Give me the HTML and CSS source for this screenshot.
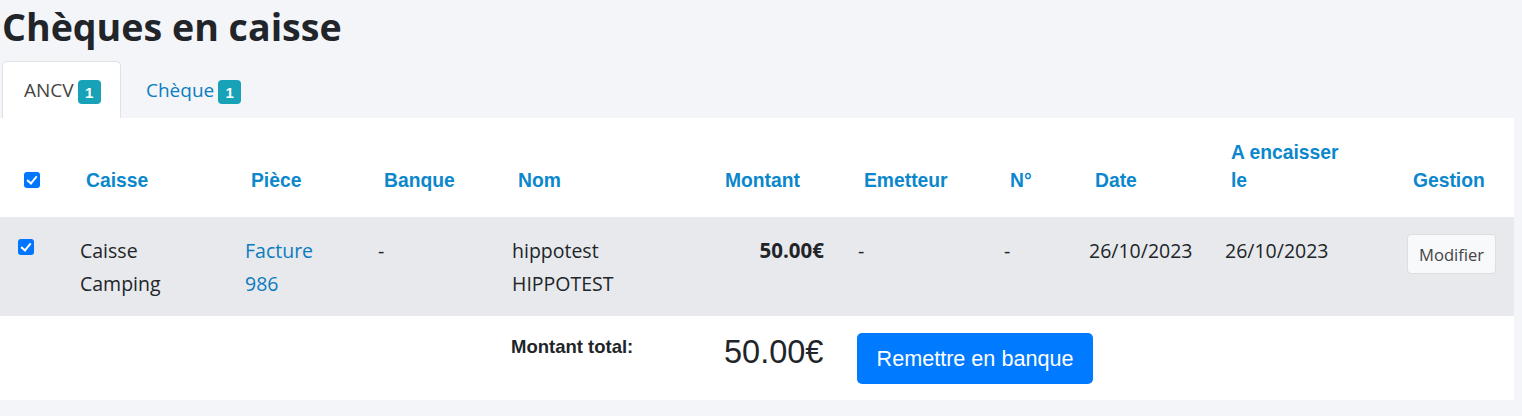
FILE: index.html
```html
<!DOCTYPE html>
<html>
<head>
  <meta charset="utf-8">
  <link rel="stylesheet" href="styles.css">
</head>
<body>
  <div class="page">
    <h1 class="page-title">Chèques en caisse</h1>

    <ul class="tabs">
      <li class="tab active">ANCV<span class="badge">1</span></li>
      <li class="tab">Chèque<span class="badge">1</span></li>
    </ul>

    <div class="panel">
      <table class="cheques">
        <colgroup>
          <col class="w-check">
          <col class="w-caisse">
          <col class="w-piece">
          <col class="w-banque">
          <col class="w-nom">
          <col class="w-montant">
          <col class="w-emetteur">
          <col class="w-numero">
          <col class="w-date">
          <col class="w-encaisser">
          <col class="w-gestion">
        </colgroup>
        <thead>
          <tr>
            <th class="col-check"><span class="check"></span></th>
            <th>Caisse</th>
            <th>Pièce</th>
            <th>Banque</th>
            <th>Nom</th>
            <th class="col-amount">Montant</th>
            <th>Emetteur</th>
            <th>N°</th>
            <th>Date</th>
            <th>A encaisser<br>le</th>
            <th>Gestion</th>
          </tr>
        </thead>
        <tbody>
          <tr>
            <td><span class="check"></span></td>
            <td>Caisse<br>Camping</td>
            <td><a href="#">Facture<br>986</a></td>
            <td>-</td>
            <td>hippotest<br>HIPPOTEST</td>
            <td class="amount">50.00€</td>
            <td>-</td>
            <td>-</td>
            <td>26/10/2023</td>
            <td>26/10/2023</td>
            <td><button class="btn-light">Modifier</button></td>
          </tr>
        </tbody>
        <tfoot>
          <tr>
            <td colspan="4"></td>
            <td class="total-label">Montant total:</td>
            <td class="total-value">50.00€</td>
            <td colspan="5"><button class="btn-primary">Remettre en banque</button></td>
          </tr>
        </tfoot>
      </table>
    </div>
  </div>
</body>
</html>
```

FILE: styles.css
```css
body {
  margin: 0;
  background-color: #f4f5f9;
  font-family: 'Open Sans', Arial, sans-serif;
  color: #212529;
}

.page {
  padding-right: 8px;
}

.page-title {
  margin: 0;
  padding: 2px 0 0 2px;
  height: 59px;
  font-size: 37.6px;
  font-weight: 700;
  color: #212529;
  line-height: 50px;
}

.tabs {
  list-style: none;
  margin: 0;
  padding: 0 0 0 2px;
  display: flex;
  height: 57px;
}

.tab {
  display: flex;
  align-items: center;
  padding: 0 22px;
  font-size: 19px;
  color: #0a7cc0;
  border: 1px solid transparent;
  border-bottom: none;
  border-radius: 5px 5px 0 0;
}

.tab.active {
  background-color: #fff;
  border-color: #dee2e6;
  color: #444;
  width: 74px;
  padding-left: 21px;
}

.tab + .tab {
  padding-left: 24px;
}

.badge {
  display: inline-flex;
  flex-shrink: 0;
  align-items: center;
  justify-content: center;
  width: 23px;
  height: 24px;
  margin: 4px 0 0 4px;
  background-color: #17a2b8;
  color: #fff;
  border-radius: 4px;
  font-family: 'Liberation Sans', Arial, sans-serif;
  font-size: 15px;
  font-weight: 700;
}

.panel {
  background-color: #fff;
  height: 282px;
}

.cheques {
  border-collapse: collapse;
  table-layout: fixed;
  width: 1514px;
}

.w-check { width: 68px; }
.w-caisse { width: 165px; }
.w-piece { width: 133px; }
.w-banque { width: 134px; }
.w-nom { width: 213px; }
.w-montant { width: 133px; }
.w-emetteur { width: 146px; }
.w-numero { width: 85px; }
.w-date { width: 136px; }
.w-encaisser { width: 182px; }
.w-gestion { width: 119px; }

.cheques th {
  height: 99px;
  box-sizing: border-box;
  padding: 0 0 22px 18px;
  vertical-align: bottom;
  text-align: left;
  font-family: 'Liberation Sans', Arial, sans-serif;
  font-size: 19.3px;
  font-weight: 700;
  line-height: 28px;
  color: #0b87cc;
}

.cheques th.col-check {
  padding-left: 24px;
}

.cheques th.col-amount {
  padding-left: 12px;
}

.cheques tbody tr {
  background-color: #e8e9ec;
}

.cheques tbody td {
  padding: 17px 0 16px 12px;
  vertical-align: top;
  font-size: 19.5px;
  line-height: 33px;
  color: #212529;
}

.cheques a {
  color: #0a7cc0;
  text-decoration: none;
}

.cheques td.amount {
  text-align: right;
  padding-right: 22px;
  font-weight: 700;
  font-size: 20.5px;
}

.check {
  display: inline-block;
  width: 16px;
  height: 16px;
  border-radius: 3px;
  background-color: #0075ff;
  position: relative;
  vertical-align: middle;
}

.check::after {
  content: '';
  position: absolute;
  left: 5px;
  top: 2px;
  width: 4px;
  height: 8px;
  border: solid #fff;
  border-width: 0 2px 2px 0;
  transform: rotate(40deg);
}

.cheques thead .check {
  margin-bottom: 4px;
}

.cheques tbody .check {
  margin-top: -12px;
  margin-left: 6px;
}

.btn-light {
  padding: 0 11px;
  height: 40px;
  background-color: #f8f9fa;
  border: 1px solid #ddd;
  border-radius: 4px;
  font-family: 'Open Sans', Arial, sans-serif;
  font-size: 16.6px;
  color: #444;
}

.cheques tfoot td {
  padding: 17px 0 0 11px;
  vertical-align: top;
  font-family: 'Liberation Sans', Arial, sans-serif;
}

.total-label {
  font-size: 18.5px;
  font-weight: 700;
  line-height: 28px;
  color: #212529;
}

.total-value {
  font-size: 32.5px;
  line-height: 38px;
  color: #212529;
}

.btn-primary {
  width: 236px;
  height: 51px;
  background-color: #007bff;
  border: none;
  border-radius: 5px;
  color: #fff;
  font-family: 'Liberation Sans', Arial, sans-serif;
  font-size: 21.6px;
}
```
